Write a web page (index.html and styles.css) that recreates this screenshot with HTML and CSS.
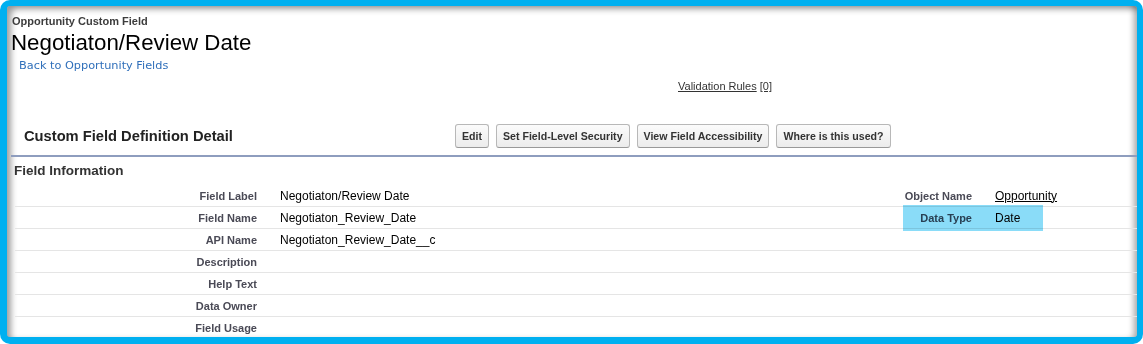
FILE: index.html
```html
<!DOCTYPE html>
<html lang="en">
<head>
  <meta charset="UTF-8">
  <meta name="viewport" content="width=device-width, initial-scale=1.0">
  <title>Negotiaton/Review Date</title>
  <link rel="stylesheet" href="styles.css">
</head>
<body>

<div class="frame">
  <!-- page header -->
  <div class="page-type">Opportunity Custom Field</div>
  <h1 class="page-title">Negotiaton/Review Date</h1>
  <a class="back-link" href="#">Back to Opportunity Fields</a>

  <div class="related-links"><a href="#">Validation Rules</a> <a href="#">[0]</a></div>

  <div class="block">
    <div class="block-header">
      <h2 class="block-title">Custom Field Definition Detail</h2>
      <div class="buttons">
        <button class="btn">Edit</button>
        <button class="btn">Set Field-Level Security</button>
        <button class="btn">View Field Accessibility</button>
        <button class="btn">Where is this used?</button>
      </div>
    </div>

    <h3 class="section-title">Field Information</h3>

    <div class="detail-wrap">
      <table class="detail-list">
        <colgroup>
          <col class="col-label">
          <col class="col-data">
          <col class="col-label2">
          <col>
        </colgroup>
        <tr>
          <td class="label">Field Label</td>
          <td class="data">Negotiaton/Review Date</td>
          <td class="label">Object Name</td>
          <td class="data"><a href="#">Opportunity</a></td>
        </tr>
        <tr>
          <td class="label">Field Name</td>
          <td class="data">Negotiaton_Review_Date</td>
          <td class="label">Data Type</td>
          <td class="data">Date</td>
        </tr>
        <tr>
          <td class="label">API Name</td>
          <td class="data">Negotiaton_Review_Date__c</td>
          <td class="label"></td>
          <td class="data"></td>
        </tr>
        <tr>
          <td class="label">Description</td>
          <td class="data"></td>
          <td class="label"></td>
          <td class="data"></td>
        </tr>
        <tr>
          <td class="label">Help Text</td>
          <td class="data"></td>
          <td class="label"></td>
          <td class="data"></td>
        </tr>
        <tr>
          <td class="label">Data Owner</td>
          <td class="data"></td>
          <td class="label"></td>
          <td class="data"></td>
        </tr>
        <tr>
          <td class="label">Field Usage</td>
          <td class="data"></td>
          <td class="label"></td>
          <td class="data"></td>
        </tr>
      </table>
      <!-- annotation over the Data Type row -->
      <div class="highlight"></div>
    </div>
  </div>
</div>

</body>
</html>
```

FILE: styles.css
```css
html {
  background: #fff;
}
body {
  margin: 0;
  height: 344px;
  padding: 6px 6px 7px 7px;
  box-sizing: border-box;
  background-color: #00b0f0;
  border-radius: 10px;
  overflow: hidden;
  font-family: "Liberation Sans", Arial, sans-serif;
}
.frame {
  height: 100%;
  box-sizing: border-box;
  padding: 8px 0 0 4px;
  background: white;
  border-radius: 3px;
  overflow: hidden;
  box-shadow: inset 7px 6px 6px -3px rgba(0,0,0,0.38), inset -6px 0 6px -3px rgba(0,0,0,0.35);
}
.page-type {
  padding-left: 1px;
  font-size: 11px;
  line-height: 14px;
  font-weight: bold;
  color: #3d3d3d;
}
.page-title {
  margin: 2px 0 0;
  font-size: 22.3px;
  line-height: 25px;
  font-weight: normal;
  color: #000;
}
.back-link {
  display: block;
  margin-top: 4px;
  padding-left: 8px;
  font-family: "DejaVu Sans", Verdana, sans-serif;
  font-size: 11.3px;
  line-height: 14px;
  color: #2f6fba;
  text-decoration: none;
}
.related-links {
  margin-top: 7px;
  padding-left: 667px;
  font-size: 11px;
  line-height: 13px;
}
.related-links a {
  color: #333;
}
.block {
  margin-top: 31px;
}
.block-header {
  display: flex;
  align-items: center;
  padding-bottom: 7px;
  border-bottom: 2px solid #8e9dbe;
}
.block-title {
  width: 444px;
  box-sizing: border-box;
  margin: 0;
  padding-left: 13px;
  font-size: 14.7px;
  font-weight: bold;
  color: #222;
}
.buttons {
  display: flex;
  gap: 7px;
}
.btn {
  height: 24px;
  padding: 0 6px;
  font-family: "Liberation Sans", Arial, sans-serif;
  font-size: 10.6px;
  font-weight: bold;
  color: #333;
  background: linear-gradient(#fbfbfb, #ececec);
  border: 1px solid #b8b8b8;
  border-bottom-color: #999;
  border-radius: 3px;
  cursor: pointer;
}
.section-title {
  margin: 7px 0 0;
  padding-left: 3px;
  font-size: 13.5px;
  line-height: 14px;
  font-weight: bold;
  color: #333;
}
.detail-wrap {
  position: relative;
  margin: 7px 0 0 4px;
}
.detail-list {
  width: 100%;
  border-collapse: collapse;
  table-layout: fixed;
}
.col-label {
  width: 252px;
}
.col-data {
  width: 626px;
}
.col-label2 {
  width: 89px;
}
.detail-list td {
  height: 21px;
  padding: 0;
  border-bottom: 1px solid #e5e5e5;
  white-space: nowrap;
}
.detail-list tr:last-child td {
  border-bottom: none;
}
.label {
  padding-right: 10px !important;
  text-align: right;
  font-size: 11px;
  font-weight: bold;
  color: #4a4a56;
}
.data {
  padding-left: 13px !important;
  font-size: 12px;
  color: #000;
}
.data a {
  color: #000;
}
.highlight {
  position: absolute;
  left: 888px;
  top: 20px;
  width: 140px;
  height: 26px;
  background: #8adcf8;
  mix-blend-mode: multiply;
}
```
